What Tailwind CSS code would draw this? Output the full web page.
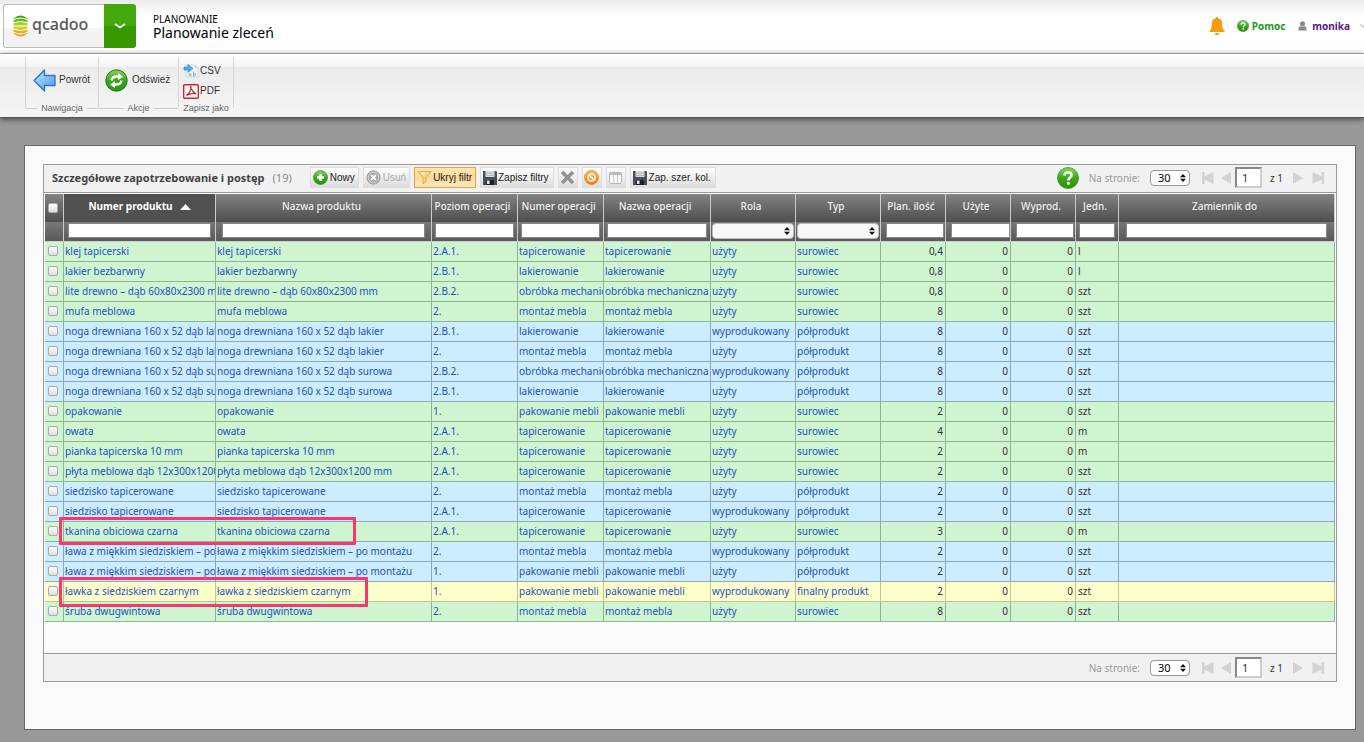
<!DOCTYPE html>
<html lang="pl">
<head>
<meta charset="utf-8">
<title>Planowanie zleceń</title>
<script src="https://cdn.jsdelivr.net/npm/@tailwindcss/browser@4"></script>
</head>
<body class="min-h-screen bg-[#999] font-['Noto_Sans','Open_Sans',sans-serif] text-[10px] leading-4 text-[#333] overflow-x-hidden">
<svg class="absolute h-0 w-0" aria-hidden="true">
  <defs>
    <linearGradient id="green" x1="0" y1="0" x2="0" y2="1"><stop offset="0" stop-color="#8ad561"/><stop offset=".5" stop-color="#3aa81c"/><stop offset="1" stop-color="#2a9310"/></linearGradient>
    <linearGradient id="blue" x1="0" y1="0" x2="1" y2="1"><stop offset="0" stop-color="#c6e6ff"/><stop offset="1" stop-color="#3f9af0"/></linearGradient>
    <linearGradient id="orange" x1="0" y1="0" x2="0" y2="1"><stop offset="0" stop-color="#ffbe55"/><stop offset="1" stop-color="#ef8010"/></linearGradient>
    <linearGradient id="logo" x1="0" y1="0" x2="0" y2="1"><stop offset="0" stop-color="#2f9e1b"/><stop offset=".5" stop-color="#c5dc2a"/><stop offset="1" stop-color="#f79420"/></linearGradient>
    <symbol id="updown" viewBox="0 0 6 8"><path d="M3 0L6 3.3H0zM3 8L6 4.7H0z" fill="#111"/></symbol>
    <symbol id="disk" viewBox="0 0 14 14"><path d="M0 0h13l1 1v13H0z" fill="#4a4f57"/><path d="M2.500 0h9v6h-9z" fill="#d9dde2"/><path d="M2.500 1.500h9v1h-9zM2.500 4h9v1h-9z" fill="#b4bac1"/><path d="M3 9h8v5H3z" fill="#1f2226"/><path d="M4 9.500h2.500V13H4z" fill="#e8e8e8"/></symbol>
    <symbol id="help" viewBox="0 0 22 22"><circle cx="11" cy="11" r="10.500" fill="url(#green)" stroke="#31981a" stroke-width=".8"/><path d="M7.600 8.600c0-2.200 1.500-3.400 3.500-3.400s3.500 1.200 3.500 3c0 2.300-3.200 2.500-3.200 5.200" fill="none" stroke="#fff" stroke-width="2.500"/><circle cx="11.400" cy="16.300" r="1.500" fill="#fff"/></symbol>
  </defs>
</svg>

<header class="flex h-[54px] items-start border-b border-[#bbb] bg-linear-to-b from-[#ebebeb] to-white to-30%">
  <div class="ml-[3px] mt-1 flex h-11 w-[133px] overflow-hidden rounded-[3px]">
    <a href="#" aria-label="qcadoo" class="flex flex-1 items-center gap-1 rounded-l-[3px] border border-r-0 border-[#bbb] bg-linear-to-b from-white from-55% to-[#f3f3f3] to-55% pl-[9px] no-underline">
      <svg width="15" height="22" viewBox="0 0 15 22"><path d="M0.500 3.500Q7.500-2.500 14.500 3.500V18.500Q7.500 24.500 0.500 18.500z" fill="url(#logo)"/><g fill="none" stroke="#fff" stroke-width="1"><path d="M0 5Q7.500 1 15 5M0 8Q7.500 5 15 8M0 11H15M0 14Q7.500 17 15 14M0 17Q7.500 21 15 17"/></g></svg>
      <span class="pb-1 font-['Noto_Sans'] text-[16px] leading-6 font-medium text-[#555]">qcadoo</span>
    </a>
    <button aria-label="Menu" class="flex w-8 items-center justify-center bg-linear-to-b from-[#43a80b] from-50% to-[#379900] to-50%">
      <svg width="12" height="6" viewBox="0 0 12 6"><path d="M1 1L6 4.500L11 1" fill="none" stroke="#fff" stroke-width="1.600"/></svg>
    </button>
  </div>
  <div class="ml-[17px] mt-3 text-black">
    <p class="leading-[14px]">PLANOWANIE</p>
    <h1 class="text-[14px] leading-[14px]">Planowanie zleceń</h1>
  </div>
  <div class="ml-auto mt-4 flex items-center font-bold">
    <svg width="16" height="20" viewBox="0 0 16 20" fill="#f59d0b"><path d="M8 1c.9 0 1.300.6 1.300 1.300 2.700.6 3.900 2.600 3.900 5.200 0 4.300.7 5.800 2.300 7.300V16H.5v-1.200c1.600-1.500 2.300-3 2.300-7.300 0-2.600 1.200-4.600 3.900-5.200C6.700 1.600 7.100 1 8 1z"/><path d="M5.800 17h4.400a2.200 2.200 0 0 1-4.400 0z"/></svg>
    <a href="#" class="ml-3 flex items-center gap-[3px] text-[#189a18]"><svg width="12" height="12"><use href="#help"/></svg>Pomoc</a>
    <a href="#" class="ml-[13px] flex items-center gap-[5px] text-[#551a8b]"><svg width="9" height="10" viewBox="0 0 9 10" fill="#888"><circle cx="4.500" cy="2.700" r="2.500"/><path d="M.5 9.500V7.500Q.5 5 3 5.200q1.500.9 3 0 2.500-.2 2.500 2.300v2z"/></svg>monika</a>
    <svg class="ml-[10px]" width="4" height="4" viewBox="0 0 4 4"><path d="M.5 .5L4 3.500" stroke="#999" fill="none"/></svg>
  </div>
</header>

<nav class="flex h-16 border-b border-[#555] bg-[linear-gradient(#fff,#f4f4f4_20%,#ebebeb_21%,#f5f5f5)] pl-[25px] pt-[3px] font-['Liberation_Sans'] text-[10px] shadow-[0_1px_6px_rgba(0,0,0,0.6)]">
  <div class="flex h-[51px] w-[74px] flex-col border-r border-l border-[#d6d6d6]">
    <button class="flex h-[46px] shrink-0 items-center gap-[3px] pl-[7px]">
      <svg width="23" height="23" viewBox="0 0 23 23"><path d="M1 11.500L11.500 1v5.500H22v10H11.500V22z" fill="url(#blue)" stroke="#2a6fd6" stroke-width="1.300" stroke-linejoin="round"/></svg>Powrót</button>
    <div class="flex shrink-0 items-center gap-1 text-[9px] leading-[11px] text-[#666]"><i class="h-px flex-1 bg-[#ccc]"></i>Nawigacja<i class="h-px flex-1 bg-[#ccc]"></i></div>
  </div>
  <div class="flex h-[51px] w-20 flex-col border-r border-[#d6d6d6]">
    <button class="flex h-[46px] shrink-0 items-center gap-1 pl-[6px]">
      <svg width="23" height="23" viewBox="0 0 23 23"><circle cx="11.500" cy="11.500" r="10.700" fill="url(#green)" stroke="#217a10"/><g fill="none" stroke="#fff" stroke-width="2.300"><path d="M6.500 11.500Q7 7.500 12 7.500h2"/><path d="M16.500 11.500Q16 15.500 11 15.500H9"/></g><path d="M13 4l5 3.800-5 3.200zM10 12l-5 3.500 5 3.600z" fill="#fff"/></svg>Odśwież</button>
    <div class="flex shrink-0 items-center gap-1 text-[9px] leading-[11px] text-[#666]"><i class="h-px flex-1 bg-[#ccc]"></i>Akcje<i class="h-px flex-1 bg-[#ccc]"></i></div>
  </div>
  <div class="flex h-[51px] w-[55px] flex-col border-r border-[#d6d6d6]">
    <button class="flex h-6 shrink-0 items-center gap-px pl-1 pt-1">
      <svg width="16" height="16" viewBox="0 0 16 16"><path d="M3 2h9l3 3v9H3z" fill="#eef3f6" stroke="#c4ccd2" stroke-width=".7"/><path d="M12 2v3h3z" fill="#ccd4da"/><path d="M1 4h4V1.500L10 5.500 5 9.500V7H1z" fill="#48b2e2" stroke="#2d86b8" stroke-width=".6"/><path d="M6.500 13q-1.300-2.500.5-2.500t.8 2.500zM10.500 8.500V13M11 10.500q2-.8 1.500 1.200T10.500 13" fill="none" stroke="#98a5ad" stroke-width=".9"/></svg>CSV</button>
    <button class="flex h-5 shrink-0 items-center gap-px pl-1">
      <svg width="16" height="15" viewBox="0 0 16 15"><rect x=".7" y=".7" width="14.600" height="13.600" rx="1" fill="#fff" stroke="#d32222" stroke-width="1.400"/><path d="M8 2.500C6.500 2.500 9 7 13 10c-1.500-.9-6-.8-9.500 1.500C6 10 8.700 5 8 2.500z" fill="none" stroke="#d32222" stroke-width="1.200"/></svg>PDF</button>
    <div class="mt-[2px] flex shrink-0 items-center justify-center text-[9px] leading-[11px] text-[#666]">Zapisz jako</div>
  </div>
</nav>

<main class="mt-[27px] mr-2 mb-3 ml-6 border border-[#666] bg-[#fafafa] pt-[18px] pr-[18px] pb-[47px] pl-[18px]">
  <section class="border border-[#999] bg-[#fbfbfb]">
    <div class="flex h-7 items-center border-b border-[#999] bg-[#f1f1f1] pr-3 pl-2 pb-[2px]">
      <h2 class="text-[11px] font-bold whitespace-nowrap text-[#444]">Szczegółowe zapotrzebowanie i postęp</h2>
      <span class="ml-2 text-[11px] text-[#888]">(19)</span>
      <div class="ml-[18px] flex gap-1 font-['Liberation_Sans'] text-[10px] text-[#222] whitespace-nowrap">
        <button class="flex h-[21px] items-center gap-[2px] border border-[#ddd] bg-linear-to-b from-white to-[#ddd] px-[2px] pr-[3px]"><svg width="15" height="15" viewBox="0 0 15 15"><circle cx="7.500" cy="7.500" r="7" fill="url(#green)" stroke="#2f9418" stroke-width=".7"/><path d="M7.500 4v7M4 7.500h7" stroke="#fff" stroke-width="2.500"/></svg>Nowy</button>
        <button disabled class="flex h-[21px] items-center gap-[2px] border border-[#ddd] bg-linear-to-b from-white to-[#ddd] px-[2px] pr-[3px] text-[#aaa]"><svg width="15" height="15" viewBox="0 0 15 15"><circle cx="7.500" cy="7.500" r="6.700" fill="#a5a5a5" stroke="#949494" stroke-width=".7"/><circle cx="7.500" cy="7.500" r="5.300" fill="none" stroke="#ddd"/><path d="M5 5l5 5M10 5l-5 5" stroke="#fff" stroke-width="2"/></svg>Usuń</button>
        <button class="flex h-[21px] items-center gap-px border border-[#f0a030] bg-linear-to-b from-[#ffe6b8] via-[#ffd898] to-[#ffeac4] px-[2px] pr-[3px]"><svg width="15" height="15" viewBox="0 0 15 15"><path d="M.7 1.500h13.600L9 7.500v4L6 14V7.500z" fill="#f8d47c" stroke="#d7a436" stroke-width=".8"/><path d="M3 2.500h5L7.500 6z" fill="#fff0c0"/></svg>Ukryj filtr</button>
        <button class="flex h-[21px] items-center gap-px border border-[#ddd] bg-linear-to-b from-white to-[#ddd] px-[2px] pr-1"><svg width="14" height="14"><use href="#disk"/></svg>Zapisz filtry</button>
        <button disabled aria-label="Wyczyść filtr" class="flex h-[21px] w-5 items-center justify-center border border-[#ddd] bg-linear-to-b from-white to-[#ddd]"><svg width="15" height="15" viewBox="0 0 15 15"><path d="M2 2l11 11M13 2L2 13" stroke="#929292" stroke-width="3.600"/></svg></button>
        <button aria-label="Resetuj filtr" class="flex h-[21px] w-5 items-center justify-center border border-[#ddd] bg-linear-to-b from-white to-[#ddd]"><svg width="15" height="15" viewBox="0 0 15 15"><circle cx="7.500" cy="7.500" r="6.900" fill="url(#orange)" stroke="#e08112" stroke-width=".8"/><circle cx="7.500" cy="7.500" r="3.600" fill="none" stroke="#fff" stroke-width="1.500"/><path d="M5 5l5 5" stroke="#fff" stroke-width="1.500"/></svg></button>
        <button disabled aria-label="Kolumny" class="flex h-[21px] w-5 items-center justify-center border border-[#ddd] bg-linear-to-b from-white to-[#ddd]"><svg width="13" height="12" viewBox="0 0 13 12"><rect x=".5" y=".5" width="12" height="11" rx="1" fill="#fafafa" stroke="#b5b5b5"/><path d="M1 1h11v2H1z" fill="#bbb"/><path d="M4.500 3v8M8.500 3v8" stroke="#ccc"/></svg></button>
        <button class="flex h-[21px] items-center gap-[2px] border border-[#ddd] bg-linear-to-b from-white to-[#ddd] px-[2px] pr-1"><svg width="14" height="14"><use href="#disk"/></svg>Zap. szer. kol.</button>
      </div>
      <button aria-label="Pomoc" class="ml-auto"><svg width="22" height="22"><use href="#help"/></svg></button>
      <div class="pager ml-[10px] flex items-center"></div>
    </div>

    <div class="relative m-px min-h-[458px]">
      <table class="w-full table-fixed border-separate border-spacing-0">
        <colgroup><col class="w-[19px]"><col class="w-[152px]"><col class="w-[216px]"><col class="w-[86px]"><col class="w-[86px]"><col class="w-[107px]"><col class="w-[85px]"><col class="w-[85px]"><col class="w-[65px]"><col class="w-[65px]"><col class="w-[65px]"><col class="w-[43px]"><col></colgroup>
        <thead class="text-[#eee]">
          <tr id="labels"></tr>
          <tr id="filters"></tr>
        </thead>
        <tbody id="rows"></tbody>
      </table>
      <div class="pointer-events-none absolute top-[323px] left-[14px] h-7 w-[297px] rounded-[1px] border-3 border-[#f9366d]"></div>
      <div class="pointer-events-none absolute top-[383px] left-[14px] h-[30px] w-[309px] rounded-[1px] border-3 border-[#f9366d]"></div>
    </div>

    <div class="flex h-7 items-center justify-end border-t border-[#999] bg-[#f1f1f1] pr-3"><div class="pager flex items-center"></div></div>
  </section>
</main>

<script>
  const heads = ['Numer produktu', 'Nazwa produktu', 'Poziom operacji', 'Numer operacji', 'Nazwa operacji', 'Rola', 'Typ', 'Plan. ilość', 'Użyte', 'Wyprod.', 'Jedn.', 'Zamiennik do'];
  const pads = ['px-1', 'px-[6px]', 'px-[3px]', 'px-[3px]', 'px-[3px]', '', '', 'pl-[5px] pr-px', 'pl-[5px] pr-0', 'pl-[5px] pr-px', 'px-[3px]', 'px-[7px]'];
  const box = 'block appearance-none border border-[#aaa] bg-linear-to-b from-white to-[#ddd] rounded-[2px] w-[10px] h-[10px]';

  document.getElementById('labels').innerHTML =
    `<th class="h-7 border-r border-[#ccc] bg-linear-to-b from-[#838383] to-[#4e4e4e] p-0 pl-[3px]"><input type="checkbox" aria-label="Zaznacz wszystkie" class="${box}"></th>` +
    heads.map((h, i) => i === 0
      ? `<th scope="col" aria-sort="ascending" class="h-7 border-r border-[#ccc] bg-[#505050] p-0 pb-1 font-bold whitespace-nowrap text-white">${h}<svg class="ml-[7px] inline" width="11" height="6" viewBox="0 0 11 6"><path d="M5.500 0L11 6H0z" fill="#fff"/></svg></th>`
      : `<th scope="col" class="h-7 overflow-hidden border-r border-[#ccc] bg-linear-to-b from-[#838383] to-[#4e4e4e] p-0 pr-1 pb-1 font-medium whitespace-nowrap">${h}</th>`).join('');

  document.getElementById('filters').innerHTML =
    '<td class="h-5 border-r border-b border-[#ccc] bg-linear-to-b from-[#777] to-[#5a5a5a]"></td>' +
    heads.map((h, i) => `<td class="h-5 border-r border-b border-[#ccc] bg-linear-to-b from-[#777] to-[#5a5a5a] p-0 pb-[2px] ${pads[i]}">` + (i === 5 || i === 6
      ? `<div class="relative mx-px"><select aria-label="${h}" class="block h-4 w-full appearance-none rounded-[4px] border border-[#bbb] bg-[#f8f8f8]"><option></option></select><svg class="pointer-events-none absolute top-1 right-1" width="6" height="8"><use href="#updown"/></svg></div>`
      : `<input type="text" aria-label="${h}" class="block h-[15px] w-full border border-[#888] bg-white px-1 text-black">`) + '</td>').join('');

  const G = 'bg-[#cff4d0] border-[#8fb592]', B = 'bg-[#cbedff] border-[#8aa9bd]', Y = 'bg-[#ffffcc] border-[#c6c28a]';
  const S = 'surowiec', P = 'półprodukt', U = 'użyty', W = 'wyprodukowany';
  const T = 'tapicerowanie', L = 'lakierowanie', M = 'montaż mebla', O = 'obróbka mechaniczna', K = 'pakowanie mebli';
  const data = [
    [G, 'klej tapicerski', '2.A.1.', T, U, S, '0,4', 'l'],
    [G, 'lakier bezbarwny', '2.B.1.', L, U, S, '0,8', 'l'],
    [G, 'lite drewno – dąb 60x80x2300 mm', '2.B.2.', O, U, S, '0,8', 'szt'],
    [G, 'mufa meblowa', '2.', M, U, S, '8', 'szt'],
    [B, 'noga drewniana 160 x 52 dąb lakier', '2.B.1.', L, W, P, '8', 'szt'],
    [B, 'noga drewniana 160 x 52 dąb lakier', '2.', M, U, P, '8', 'szt'],
    [B, 'noga drewniana 160 x 52 dąb surowa', '2.B.2.', O, W, P, '8', 'szt'],
    [B, 'noga drewniana 160 x 52 dąb surowa', '2.B.1.', L, U, P, '8', 'szt'],
    [G, 'opakowanie', '1.', K, U, S, '2', 'szt'],
    [G, 'owata', '2.A.1.', T, U, S, '4', 'm'],
    [G, 'pianka tapicerska 10 mm', '2.A.1.', T, U, S, '2', 'm'],
    [G, 'płyta meblowa dąb 12x300x1200 mm', '2.A.1.', T, U, S, '2', 'szt'],
    [B, 'siedzisko tapicerowane', '2.', M, U, P, '2', 'szt'],
    [B, 'siedzisko tapicerowane', '2.A.1.', T, W, P, '2', 'szt'],
    [G, 'tkanina obiciowa czarna', '2.A.1.', T, U, S, '3', 'm'],
    [B, 'ława z miękkim siedziskiem – po montażu', '2.', M, W, P, '2', 'szt'],
    [B, 'ława z miękkim siedziskiem – po montażu', '1.', K, U, P, '2', 'szt'],
    [Y, 'ławka z siedziskiem czarnym', '1.', K, W, 'finalny produkt', '2', 'szt'],
    [G, 'śruba dwugwintowa', '2.', M, U, S, '8', 'szt'],
  ];
  document.getElementById('rows').innerHTML = data.map(([c, name, lvl, op, role, type, qty, unit]) => {
    const link = t => `<td class="h-5 overflow-hidden border-r border-b p-0 pb-[2px] pl-px whitespace-nowrap ${c}"><a href="#" class="text-[#1c50c4]">${t}</a></td>`;
    const num = t => `<td class="h-5 border-r border-b p-0 pr-[2px] pb-[2px] text-right ${c}">${t}</td>`;
    return `<tr><td class="h-5 border-r border-b p-0 pb-[2px] pl-[3px] ${c}"><input type="checkbox" aria-label="${name}" class="${box}"></td>` +
      [name, name, lvl, op, op, role, type].map(link).join('') + num(qty) + num('0') + num('0') +
      `<td class="h-5 border-r border-b p-0 pb-[2px] pl-[2px] ${c}">${unit}</td><td class="h-5 border-r border-b p-0 ${c}"></td></tr>`;
  }).join('');

  document.querySelectorAll('.pager').forEach((p, i) => {
    p.innerHTML = `<label for="size${i}" class="mr-[10px] text-[#999]">Na stronie:</label>
      <div class="relative"><select id="size${i}" class="block h-4 w-10 appearance-none rounded-[4px] border border-[#999] bg-white pl-[7px] text-[11px] leading-[14px] text-black"><option>30</option></select><svg class="pointer-events-none absolute top-1 right-1" width="6" height="8"><use href="#updown"/></svg></div>
      <button disabled aria-label="Pierwsza" class="ml-3"><svg width="12" height="12" viewBox="0 0 12 12" fill="#d3d3d3"><path d="M0 0h2.500v4.500L11.500 0v12L2.500 7.500V12H0z"/></svg></button>
      <button disabled aria-label="Poprzednia" class="ml-[7px]"><svg width="10" height="12" viewBox="0 0 10 12" fill="#d3d3d3"><path d="M10 0v12L0 6z"/></svg></button>
      <input type="text" aria-label="Strona" value="1" class="ml-1 h-[21px] w-[27px] border-2 border-[#ccc] border-t-[#888] border-l-[#888] bg-white pl-[5px] text-[11px]">
      <span class="ml-2 w-4 whitespace-nowrap">z 1</span>
      <button disabled aria-label="Następna" class="ml-[7px]"><svg width="10" height="12" viewBox="0 0 10 12" fill="#d3d3d3"><path d="M0 0v12L10 6z"/></svg></button>
      <button disabled aria-label="Ostatnia" class="ml-[9px]"><svg width="12" height="12" viewBox="0 0 12 12" fill="#d3d3d3"><path d="M12 0H9.500v4.500L.5 0v12L9.500 7.500V12H12z"/></svg></button>`;
  });
</script>
</body>
</html>
